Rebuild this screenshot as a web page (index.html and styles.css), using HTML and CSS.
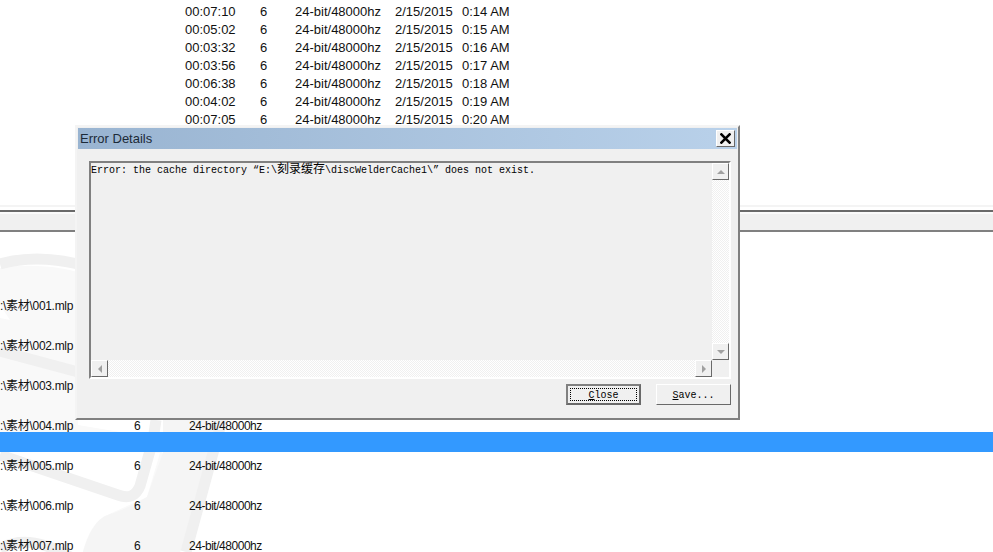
FILE: index.html
```html
<!DOCTYPE html>
<html lang="en">
  <head>
    <meta charset="utf-8">
    <title>Error Details</title>
    <link rel="stylesheet" href="styles.css">
  </head>
  <body>
    <div id="page">
      <div class="top-list">
        <div class="top-row"><span class="c-time">00:07:10</span><span class="c-ch">6</span><span class="c-fmt">24-bit/48000hz</span><span class="c-date">2/15/2015</span><span>0:14 AM</span></div>
        <div class="top-row"><span class="c-time">00:05:02</span><span class="c-ch">6</span><span class="c-fmt">24-bit/48000hz</span><span class="c-date">2/15/2015</span><span>0:15 AM</span></div>
        <div class="top-row"><span class="c-time">00:03:32</span><span class="c-ch">6</span><span class="c-fmt">24-bit/48000hz</span><span class="c-date">2/15/2015</span><span>0:16 AM</span></div>
        <div class="top-row"><span class="c-time">00:03:56</span><span class="c-ch">6</span><span class="c-fmt">24-bit/48000hz</span><span class="c-date">2/15/2015</span><span>0:17 AM</span></div>
        <div class="top-row"><span class="c-time">00:06:38</span><span class="c-ch">6</span><span class="c-fmt">24-bit/48000hz</span><span class="c-date">2/15/2015</span><span>0:18 AM</span></div>
        <div class="top-row"><span class="c-time">00:04:02</span><span class="c-ch">6</span><span class="c-fmt">24-bit/48000hz</span><span class="c-date">2/15/2015</span><span>0:19 AM</span></div>
        <div class="top-row"><span class="c-time">00:07:05</span><span class="c-ch">6</span><span class="c-fmt">24-bit/48000hz</span><span class="c-date">2/15/2015</span><span>0:20 AM</span></div>
      </div>

      <div class="header-bar"></div>

      <div class="tracks">
        <svg class="watermark" width="330" height="320" viewBox="0 232 330 320">
          <!-- light body of the logo -->
          <path d="M0 268 Q40 262 78 272 L78 425 L120 432 L163 453 L213 453 L228 405 L180 552 L83 552 Q90 525 105 516 L147 497 L160 453 L20 445 L0 440 Z" fill="#f9f9f9"/>
          <path d="M0 305 L0 318 L10 320 Z" fill="#fff"/>
          <path d="M83 552 Q90 525 105 516 Q130 508 147 497 L163 453 L163 420 L228 420 L180 552 Z" fill="#f5f5f5"/>
          <g fill="none" stroke="#f0f0f0" stroke-width="11">
            <path d="M0 264 Q35 254 78 264"/>
            <path d="M0 351 L78 372"/>
            <path d="M0 455 L118 495 Q134 501 140 486 L153 440 L156 420"/>
            <path d="M222 420 L186 552"/>
            <path d="M0 549 Q28 532 72 558"/>
          </g>
        </svg>
        <div class="track-row"><span class="c-name">:\素材\001.mlp</span></div>
        <div class="track-row"><span class="c-name">:\素材\002.mlp</span></div>
        <div class="track-row"><span class="c-name">:\素材\003.mlp</span></div>
        <div class="track-row"><span class="c-name">:\素材\004.mlp</span><span class="c-num">6</span><span class="c-bits">24-bit/48000hz</span></div>
        <div class="selected"></div>
        <div class="track-row"><span class="c-name">:\素材\005.mlp</span><span class="c-num">6</span><span class="c-bits">24-bit/48000hz</span></div>
        <div class="track-row"><span class="c-name">:\素材\006.mlp</span><span class="c-num">6</span><span class="c-bits">24-bit/48000hz</span></div>
        <div class="track-row"><span class="c-name">:\素材\007.mlp</span><span class="c-num">6</span><span class="c-bits">24-bit/48000hz</span></div>
      </div>

      <div class="dialog">
        <div class="titlebar">
          <span>Error Details</span>
          <a class="btn-x">
            <svg width="11" height="11" viewBox="0 0 11 11"><path d="M0.5 0.5 L10.5 10.5 M10.5 0.5 L0.5 10.5" stroke="#000" stroke-width="2.6" fill="none"/></svg>
          </a>
        </div>
        <div class="dialog-body">
          <div class="textbox">
            <div class="text-main">
              <div class="text-content">Error: the cache directory “E:\<span class="cjk">刻录缓存</span>\discWelderCache1\” does not exist.</div>
              <div class="scroll-h">
                <a class="sb-btn"><i class="arr arr-left"></i></a>
                <div class="sb-track"></div>
                <a class="sb-btn"><i class="arr arr-right"></i></a>
              </div>
            </div>
            <div class="scroll-v">
              <a class="sb-btn"><i class="arr arr-up"></i></a>
              <div class="sb-track"></div>
              <a class="sb-btn"><i class="arr arr-down"></i></a>
              <div class="corner"></div>
            </div>
          </div>
          <div class="buttons">
            <a class="button button-default"><span class="focus"><u>C</u>lose</span></a>
            <a class="button"><span class="focus-none"><u>S</u>ave...</span></a>
          </div>
        </div>
      </div>
    </div>
  </body>
</html>
```

FILE: styles.css
```css
html, body{
  margin:0;
  padding:0;
  background:#fff;
}
#page{
  position:relative;
  width:993px;
  height:552px;
  overflow:hidden;
  font-family:"Liberation Sans", "Noto Sans CJK SC", sans-serif;
  color:#111;
}
/*list behind the dialog, top*/
.top-list{
  height:207px;
  margin-bottom:3px;
  padding:3px 0 0 185px;
  box-sizing:border-box;
  border-bottom:2px solid #f4f4f4;
  font-size:13px;
}
.top-row{
  display:flex;
  height:18px;
  line-height:18px;
  white-space:nowrap;
}
.c-time{width:75px;}
.c-ch{width:35px;}
.c-fmt{width:100px;}
.c-date{width:67px;}
/*header strip*/
.header-bar{
  height:18px;
  background:#f0f0f0;
  border-top:2px solid #696969;
  border-bottom:2px solid #808080;
  box-shadow:inset 0 2px 0 #fafafa;
}
/*track rows*/
.tracks{
  position:relative;
  height:320px;
  padding-top:64px;
  box-sizing:border-box;
  font-size:12px;
  overflow:hidden;
}
.watermark{
  position:absolute;
  left:0;
  top:0;
}
.track-row{
  position:relative;
  display:flex;
  height:40px;
  padding-top:4px;
  box-sizing:border-box;
  line-height:12px;
  white-space:nowrap;
}
.c-name{width:134px;letter-spacing:-0.3px;}
.c-num{width:55px;}
.c-bits{letter-spacing:-0.47px;}
.selected{
  position:absolute;
  left:0;
  right:0;
  top:200px;
  height:20px;
  background:#3399ff;
}
/*dialog*/
.dialog{
  position:absolute;
  left:75px;
  top:125px;
  width:665px;
  height:295px;
  box-sizing:border-box;
  background:#f0f0f0;
  border:2px solid;
  border-color:#f4f4f4 #808080 #808080 #f4f4f4;
  padding:1px;
}
.titlebar{
  display:flex;
  align-items:center;
  justify-content:space-between;
  height:21px;
  padding:0 2px;
  background:linear-gradient(to right, #99b4d1, #b9d1ea);
  font-size:13px;
  color:#1c2a38;
}
.btn-x{
  display:flex;
  align-items:center;
  justify-content:center;
  width:19px;
  height:17px;
  box-sizing:border-box;
  background:#f0f0f0;
  border:1px solid;
  border-color:#fff #696969 #696969 #fff;
}
.dialog-body{
  padding:12px 6px 0 11px;
}
.textbox{
  display:flex;
  height:218px;
  box-sizing:border-box;
  border:2px solid;
  border-color:#808080 #fff #fff #808080;
}
.text-main{
  flex:1;
  display:flex;
  flex-direction:column;
  min-width:0;
}
.text-content{
  flex:1;
  font-family:"Liberation Mono", "Noto Sans CJK SC", monospace;
  font-size:10px;
  line-height:12px;
  color:#000;
  white-space:nowrap;
}
.cjk{
  font-family:"Noto Sans CJK SC", sans-serif;
  font-size:12px;
  line-height:10px;
}
/*scrollbars*/
.scroll-h{
  display:flex;
  height:17px;
}
.scroll-v{
  display:flex;
  flex-direction:column;
  width:17px;
}
.sb-btn{
  display:flex;
  align-items:center;
  justify-content:center;
  flex:none;
  width:17px;
  height:17px;
  box-sizing:border-box;
  background:#f0f0f0;
  border:1px solid;
  border-color:#fff #696969 #696969 #fff;
}
.sb-track{
  flex:1;
  background:repeating-conic-gradient(#fff 0% 25%, #f0f0f0 0% 50%) 0 0 / 2px 2px;
}
.corner{
  flex:none;
  height:17px;
  background:#f0f0f0;
}
.arr{
  display:block;
  width:0;
  height:0;
  border:4px solid transparent;
}
.arr-up{border-bottom-color:#a0a0a0;border-top-width:0;}
.arr-down{border-top-color:#a0a0a0;border-bottom-width:0;}
.arr-left{border-right-color:#a0a0a0;border-left-width:0;}
.arr-right{border-left-color:#a0a0a0;border-right-width:0;}
/*buttons*/
.buttons{
  display:flex;
  justify-content:flex-end;
  gap:15px;
  padding:5px 0 0 0;
}
.button{
  display:flex;
  width:75px;
  height:21px;
  box-sizing:border-box;
  padding:2px;
  background:#f0f0f0;
  border:1px solid;
  border-color:#fff #696969 #696969 #fff;
  font-family:"Liberation Mono", monospace;
  font-size:10px;
  color:#000;
}
.button-default{
  border:2px solid #696969;
  border-top-color:#808080;
  border-left-color:#808080;
  padding:2px;
}
.focus, .focus-none{
  flex:1;
  display:flex;
  align-items:center;
  justify-content:center;
  box-sizing:border-box;
  padding-top:1px;
}
.focus{border:1px dotted #000;}
```
